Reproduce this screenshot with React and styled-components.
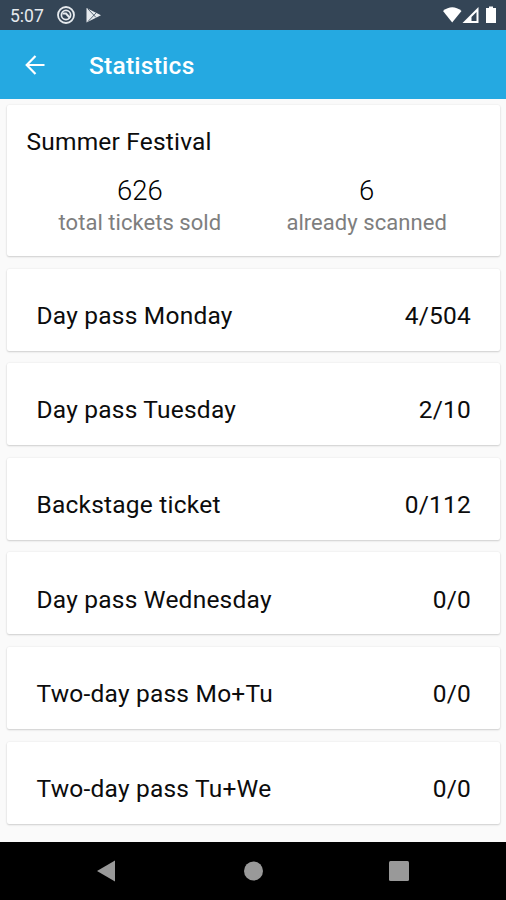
import React from 'react'
import styled, { createGlobalStyle } from 'styled-components'

const GlobalStyle = createGlobalStyle`
  * {
    box-sizing: border-box;
  }

  body {
    background: #000;
    font-family: Roboto, "Liberation Sans", sans-serif;
    margin: 0;
  }
`

const Screen = styled.div`
  background: #fafafa;
  display: flex;
  flex-direction: column;
  height: 900px;
  overflow: hidden;
  width: 506px;
`

const StatusBar = styled.div`
  align-items: center;
  background: #344556;
  color: #e6eaee;
  display: flex;
  flex: none;
  height: 30px;
  justify-content: space-between;
  padding: 0 7px 0 10px;
`

const Clock = styled.span`
  font-size: 17.5px;
  line-height: 30px;
  margin-right: 13px;
  padding-top: 1px;
`

const StatusGroup = styled.div`
  align-items: center;
  display: flex;

  svg {
    display: block;
  }
`

const Toolbar = styled.header`
  align-items: center;
  background: #25a9e1;
  color: #fff;
  display: flex;
  flex: none;
  height: 69px;
  padding: 0 25px;
`

const BackButton = styled.button`
  background: none;
  border: 0;
  color: inherit;
  display: flex;
  margin-right: 44px;
  padding: 0;
`

const Title = styled.h1`
  font-size: 24.5px;
  font-weight: 500;
  letter-spacing: 0.25px;
  line-height: 32px;
  margin: 2px 0 0;
`

const Content = styled.main`
  display: flex;
  flex: 1;
  flex-direction: column;
  gap: 12.6px;
  padding: 6px 6px 0 7px;
`

const Card = styled.section`
  background: #fff;
  border-radius: 2px;
  box-shadow: 0 1px 2px rgba(0, 0, 0, 0.16), 0 0 2px rgba(0, 0, 0, 0.08);
  color: #0c0c0c;
  flex: none;
`

const Summary = styled(Card)`
  height: 151px;
  padding: 22px 20px 0 19.5px;
`

const EventName = styled.h2`
  font-size: 24.5px;
  font-weight: 400;
  letter-spacing: 0.2px;
  line-height: 30px;
  margin: 0;
`

const Totals = styled.div`
  display: flex;
  margin-top: 15px;
`

const Total = styled.div`
  flex: 1;
  text-align: center;
`

const TotalValue = styled.div`
  color: #000;
  font-size: 27.5px;
  font-weight: 300;
  line-height: 37px;
`

const TotalLabel = styled.div`
  color: #7e7e7e;
  font-size: 22px;
  letter-spacing: 0.05px;
  line-height: 28px;
`

const TicketRow = styled(Card)`
  align-items: center;
  display: flex;
  font-size: 24.5px;
  height: 82px;
  justify-content: space-between;
  letter-spacing: 0.22px;
  padding: 11.5px 29px 0 29.5px;
`

const NavBar = styled.nav`
  align-items: center;
  background: #000;
  display: flex;
  flex: none;
  height: 58px;
  justify-content: space-between;
  padding: 0 97px 0 96px;
`

const tickets = [
  { name: 'Day pass Monday', count: '4/504' },
  { name: 'Day pass Tuesday', count: '2/10' },
  { name: 'Backstage ticket', count: '0/112' },
  { name: 'Day pass Wednesday', count: '0/0' },
  { name: 'Two-day pass Mo+Tu', count: '0/0' },
  { name: 'Two-day pass Tu+We', count: '0/0' }
]

const NotificationIcons = () => (
  <svg width="48" height="20" viewBox="0 0 48 20" fill="none">
    <circle cx="9" cy="10" r="8" stroke="#e6eaee" strokeWidth="1.8" />
    <circle cx="9" cy="10" r="4.6" stroke="#e6eaee" strokeWidth="1.7" />
    <path d="M5.500 8.500h3.500l4 4.500" stroke="#e6eaee" strokeWidth="2" />
    <path d="M29.500 3v14.500l14.500-7.250z" fill="#e6eaee" />
    <path d="M31 4l8 8.500M31 16.500l8-8.500" stroke="#344556" strokeWidth="0.8" />
  </svg>
)

const DeviceIcons = () => (
  <svg width="57" height="20" viewBox="0 0 57 20">
    <path d="M1 6Q10.200 -1.500 19.500 6L10.200 17.500z" fill="#fff" />
    <path d="M36.500 2v16H20.500z" fill="#fff" />
    <path d="M34.500 7v9h-5v-4z" fill="#344556" />
    <path d="M44 3h3V1.500h4V3h3v15H44z" fill="#fff" />
  </svg>
)

const BackArrow = () => (
  <svg width="20" height="20" viewBox="0 0 20 20" fill="none" stroke="currentColor" strokeWidth="2.2">
    <path d="M19.500 10H2M10.500 1L1.700 10l8.800 9" />
  </svg>
)

export default function App() {
  return (
    <>
      <GlobalStyle />
      <Screen>
        <StatusBar>
          <StatusGroup>
            <Clock>5:07</Clock>
            <NotificationIcons />
          </StatusGroup>
          <DeviceIcons />
        </StatusBar>
        <Toolbar>
          <BackButton aria-label="Back">
            <BackArrow />
          </BackButton>
          <Title>Statistics</Title>
        </Toolbar>
        <Content>
          <Summary>
            <EventName>Summer Festival</EventName>
            <Totals>
              <Total>
                <TotalValue>626</TotalValue>
                <TotalLabel>total tickets sold</TotalLabel>
              </Total>
              <Total>
                <TotalValue>6</TotalValue>
                <TotalLabel>already scanned</TotalLabel>
              </Total>
            </Totals>
          </Summary>
          {tickets.map(ticket => (
            <TicketRow key={ticket.name}>
              <span>{ticket.name}</span>
              <span>{ticket.count}</span>
            </TicketRow>
          ))}
        </Content>
        <NavBar>
          <svg width="20" height="22" viewBox="0 0 20 22" fill="#999">
            <path d="M1 11L19 0.500v21z" />
          </svg>
          <svg width="20" height="20" viewBox="0 0 20 20" fill="#999">
            <circle cx="10.500" cy="10" r="9.500" />
          </svg>
          <svg width="20" height="20" viewBox="0 0 20 20" fill="#999">
            <rect width="20" height="20" rx="1.500" />
          </svg>
        </NavBar>
      </Screen>
    </>
  )
}
